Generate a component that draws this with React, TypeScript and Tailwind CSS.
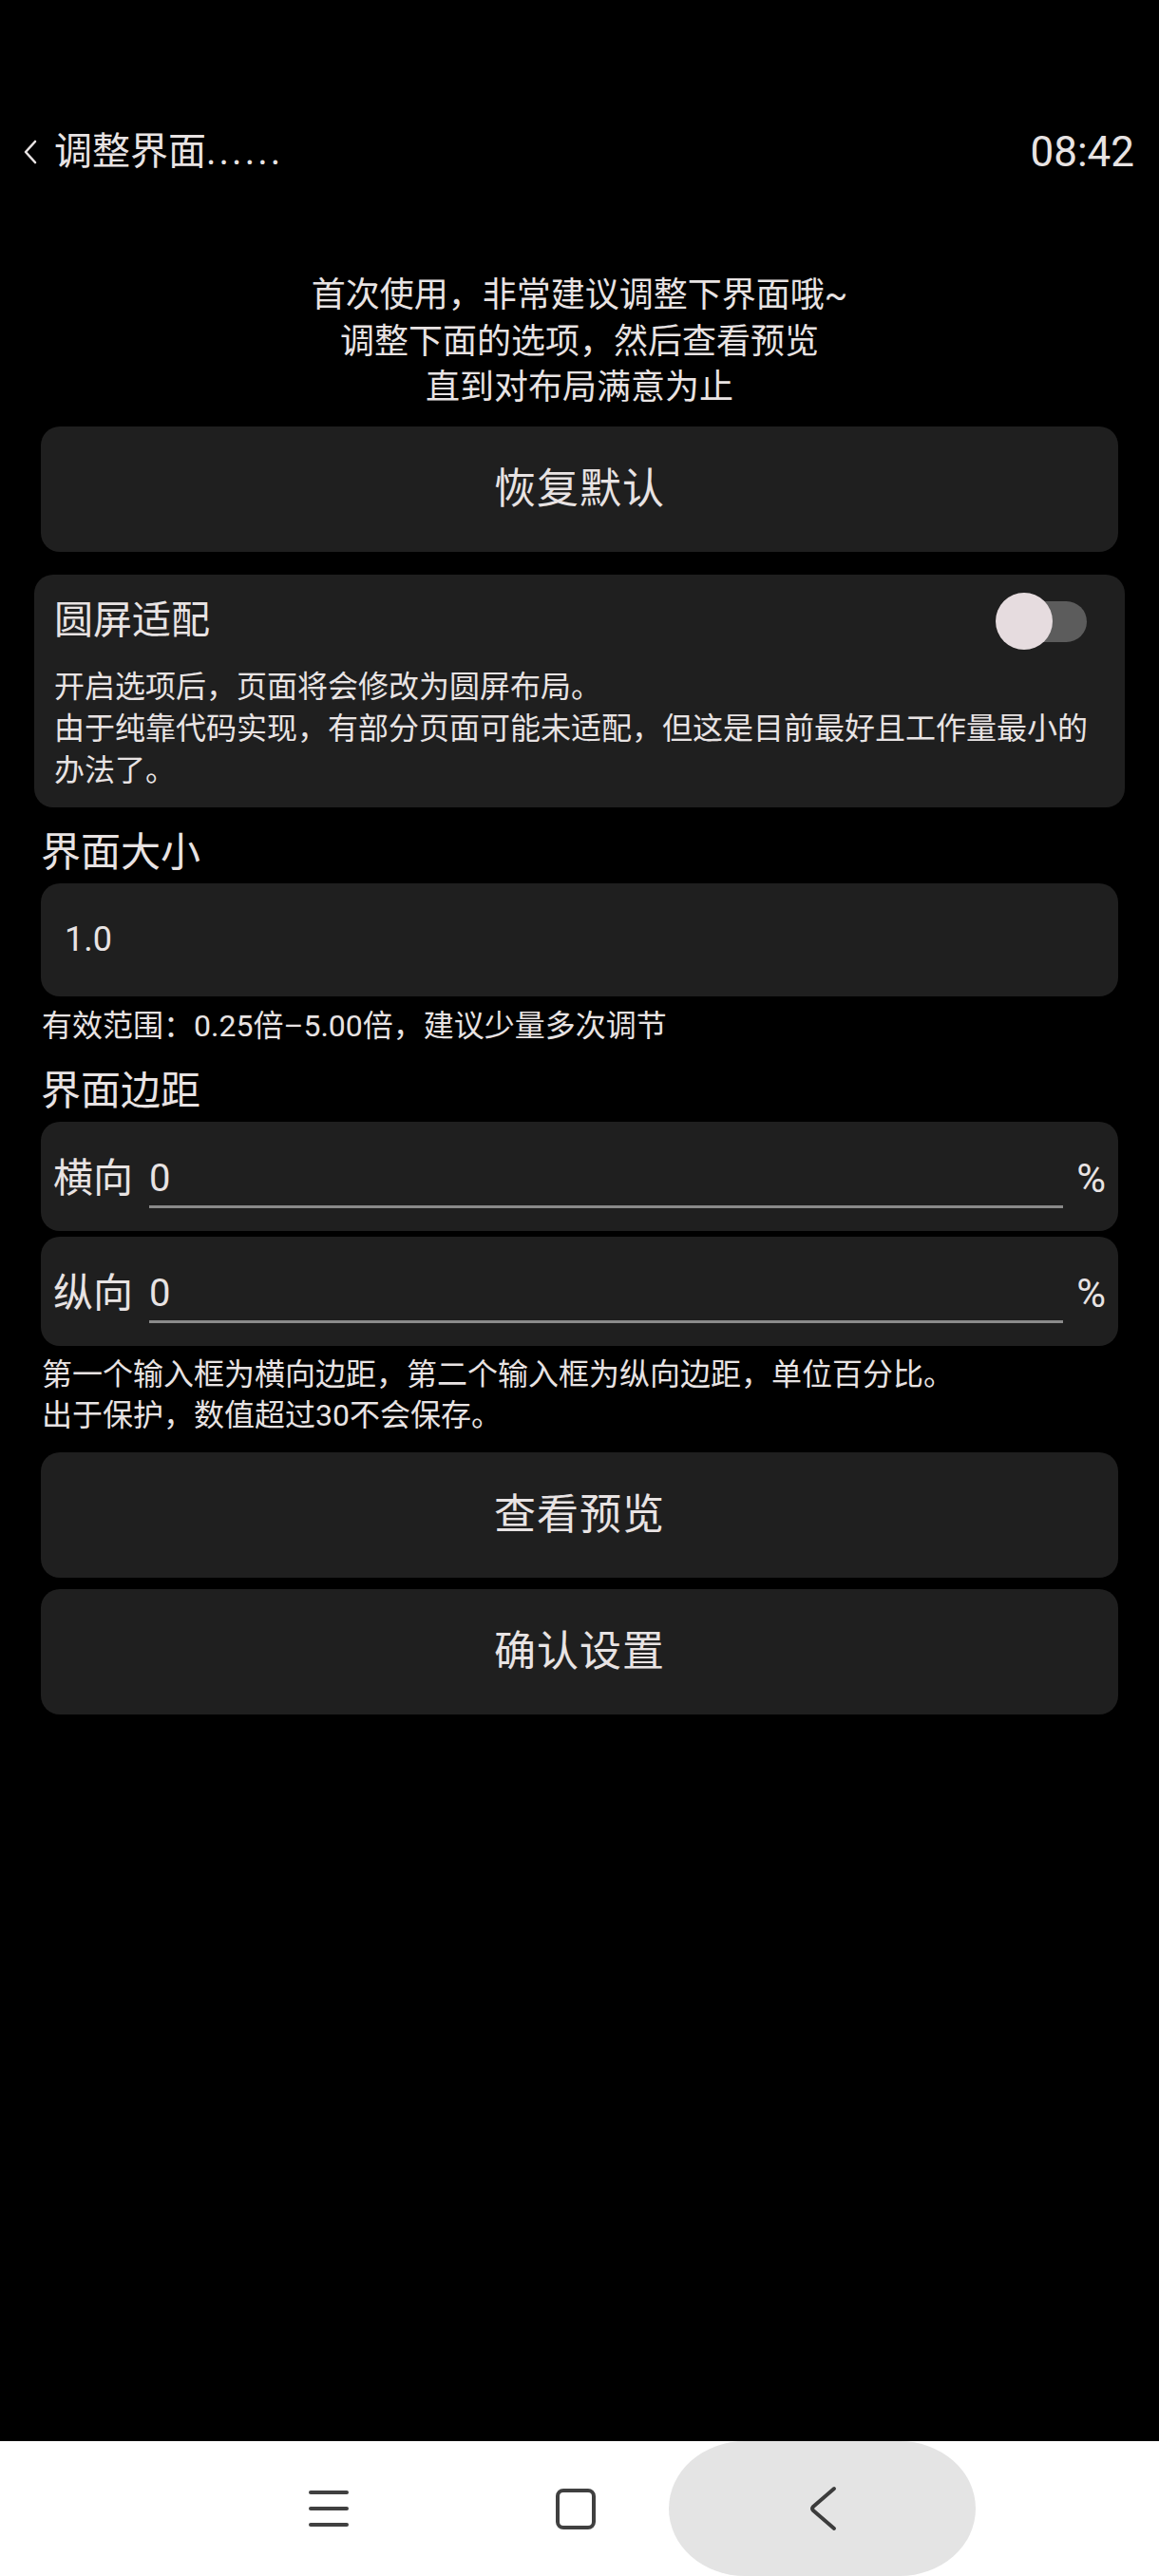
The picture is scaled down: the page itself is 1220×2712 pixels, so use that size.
import { useState } from 'react';

const FONT = 'font-["Roboto","Noto_Sans_CJK_SC",sans-serif]';

function BackChevron() {
  return (
    <svg width="18" height="28" viewBox="0 0 18 28" className="shrink-0">
      <path d="M14 3 L4 14 L14 25" fill="none" stroke="#e8e3e3" strokeWidth="2.6" strokeLinecap="round" strokeLinejoin="round" />
    </svg>
  );
}

function BigButton({ label, className = '' }: { label: string; className?: string }) {
  return (
    <button className={`mx-[43px] h-[132px] rounded-[20px] bg-[#1f1f1f] text-[44px] text-[#e8e3e3] tracking-[1px] flex items-center justify-center ${className}`}>
      {label}
    </button>
  );
}

function MarginRow({ label, value, className = '' }: { label: string; value: string; className?: string }) {
  return (
    <div className={`mx-[43px] h-[115px] rounded-[20px] bg-[#1f1f1f] flex items-start pt-[35px] pl-[13px] pr-[13px] ${className}`}>
      <span className="text-[42px] leading-[50px] text-[#e8e3e3]">{label}</span>
      <div className="flex-1 ml-[17px] mr-[14px] pb-[3px] border-b-[3px] border-[#8a8a8a]">
        <span className="text-[40px] leading-[50px] text-[#e8e3e3]">{value}</span>
      </div>
      <span className="text-[42px] leading-[50px] text-[#e8e3e3]">%</span>
    </div>
  );
}

export default function App() {
  const [round, setRound] = useState(false);

  return (
    <div className={`w-[1220px] h-[2712px] bg-black flex flex-col ${FONT}`}>
      {/* header */}
      <div className="mt-[134px] h-[52px] flex items-center justify-between pl-[23px] pr-[26px]">
        <div className="flex items-center gap-[16px]">
          <BackChevron />
          <span className="text-[40px] text-[#e8e3e3] leading-[52px]">
            调整界面<span className="tracking-[3px]">......</span>
          </span>
        </div>
        <span className="text-[44px] text-[#e8e3e3] leading-[52px]">08:42</span>
      </div>

      {/* intro */}
      <div className="mt-[101px] text-center text-[36px] leading-[48.5px] text-[#e8e3e3]">
        <p>首次使用，非常建议调整下界面哦~</p>
        <p>调整下面的选项，然后查看预览</p>
        <p>直到对布局满意为止</p>
      </div>

      <BigButton label="恢复默认" className="mt-[16px]" />

      {/* round screen card */}
      <div className="mt-[24px] mx-[36px] rounded-[20px] bg-[#1f1f1f] pt-[19px] pb-[17px] pl-[21px] pr-[18px]">
        <div className="h-[60px] flex items-center justify-between mr-[22px]">
          <span className="text-[41px] text-[#e8e3e3]">圆屏适配</span>
          <button onClick={() => setRound(!round)} className="relative w-[96px] h-[60px]">
            <span className={`absolute right-0 top-[9px] w-[84px] h-[43px] rounded-full ${round ? 'bg-[#8a7f82]' : 'bg-[#5c5c5c]'}`} />
            <span className={`absolute top-0 w-[60px] h-[60px] rounded-full bg-[#e6dcdf] ${round ? 'right-0' : 'left-0'}`} />
          </button>
        </div>
        <div className="mt-[17px] text-[32px] leading-[44px] text-[#e8e3e3]">
          <p>开启选项后，页面将会修改为圆屏布局。</p>
          <p>由于纯靠代码实现，有部分页面可能未适配，但这是目前最好且工作量最小的办法了。</p>
        </div>
      </div>

      {/* size */}
      <h2 className="mt-[24px] ml-[43px] text-[42px] leading-[48px] text-[#e8e3e3]">界面大小</h2>
      <div className="mt-[8px] mx-[43px] h-[119px] rounded-[20px] bg-[#1f1f1f] flex items-center pl-[25px]">
        <span className="text-[36px] text-[#e8e3e3]">1.0</span>
      </div>
      <p className="mt-[9px] ml-[44px] text-[32px] leading-[44px] text-[#e8e3e3]">有效范围：0.25倍–5.00倍，建议少量多次调节</p>

      {/* margin */}
      <h2 className="mt-[23px] ml-[43px] text-[42px] leading-[48px] text-[#e8e3e3]">界面边距</h2>
      <MarginRow label="横向" value="0" className="mt-[8px]" />
      <MarginRow label="纵向" value="0" className="mt-[6px]" />
      <div className="mt-[9px] ml-[44px] text-[32px] leading-[43px] text-[#e8e3e3]">
        <p>第一个输入框为横向边距，第二个输入框为纵向边距，单位百分比。</p>
        <p>出于保护，数值超过30不会保存。</p>
      </div>

      <BigButton label="查看预览" className="mt-[17px]" />
      <BigButton label="确认设置" className="mt-[12px]" />

      <div className="flex-1" />

      {/* nav bar */}
      <div className="h-[142px] bg-white flex items-center">
        <div className="ml-[325px] w-[42px] flex flex-col gap-[13px]">
          <span className="h-[4px] rounded-full bg-[#404040]" />
          <span className="h-[4px] rounded-full bg-[#404040]" />
          <span className="h-[4px] rounded-full bg-[#404040]" />
        </div>
        <div className="ml-[218px] w-[42px] h-[43px] rounded-[8px] border-[4px] border-[#404040]" />
        <div className="ml-[77px] w-[323px] h-[142px] rounded-[80px/71px] bg-[#e4e4e4] flex items-center justify-center">
          <svg width="32" height="48" viewBox="0 0 32 48">
            <path d="M28 3 L6 22 Q4 24 6 26 L28 45" fill="none" stroke="#3c3c3c" strokeWidth="4" strokeLinecap="round" strokeLinejoin="round" />
          </svg>
        </div>
      </div>
    </div>
  );
}
